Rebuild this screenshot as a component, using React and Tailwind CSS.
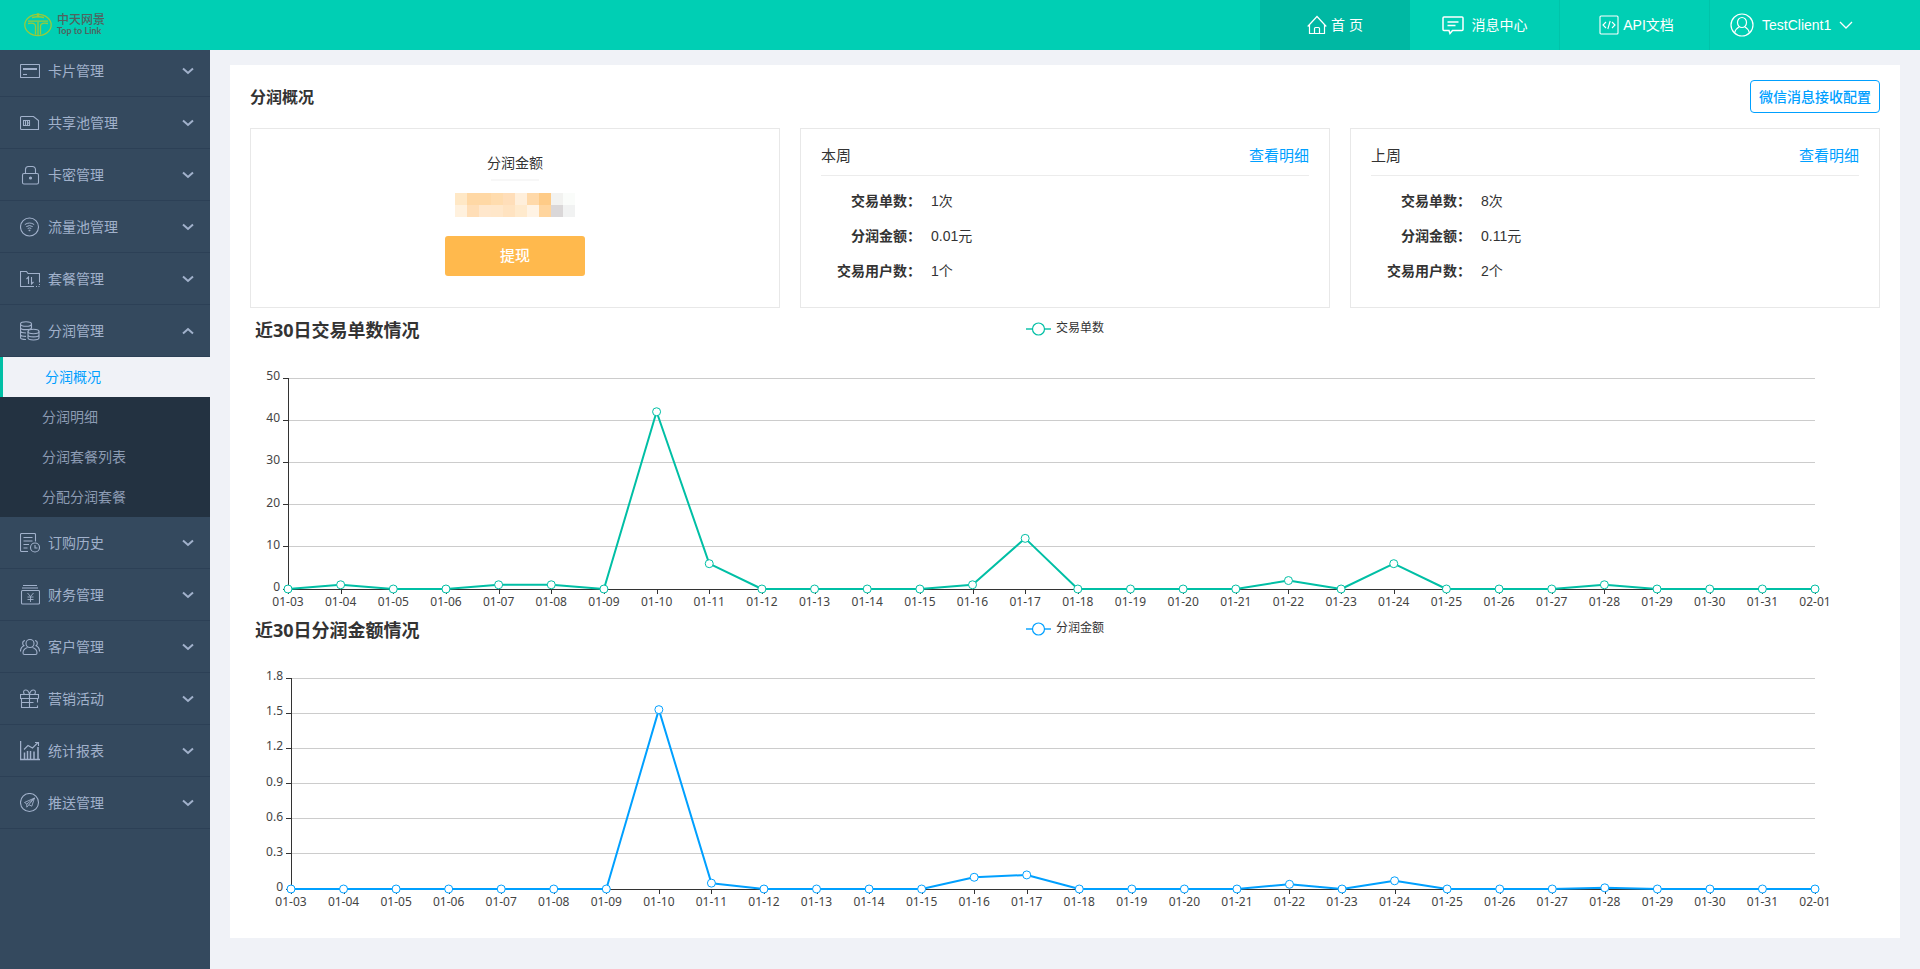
const CJK = "font-['Liberation_Sans','Noto_Sans_CJK_SC',sans-serif]";
const NOTO = "font-['Noto_Sans','Noto_Sans_CJK_SC',sans-serif]";

const ICONS = {
  card: (
    <>
      <rect x="0.5" y="3.5" width="19" height="13" rx="0.5" />
      <path d="M3 8h14" strokeWidth="2" />
      <path d="M3 13.5h4" />
    </>
  ),
  sim: (
    <>
      <path d="M1.5 3.5h12l5 4v9h-17a1 1 0 0 1-1-1v-11a1 1 0 0 1 1-1z" />
      <path d="M3.5 7.5h6v5h-6zM5.5 7.5v5M7.5 7.5v5M7.5 10h2" />
    </>
  ),
  lock: (
    <>
      <rect x="2.5" y="8.5" width="16" height="10.5" rx="1.5" />
      <path d="M5.5 8V4.5a3 3 0 0 1 3-3h4a3 3 0 0 1 3 3V8" />
      <circle cx="10.5" cy="13" r="1" fill="currentColor" />
    </>
  ),
  wifi: (
    <>
      <circle cx="9.5" cy="10" r="9" />
      <path d="M4.800 7.600q4.700-3.200 9.400 0M6.300 9.600q3.200-2.100 6.400 0M7.700 11.500q1.800-1.200 3.600 0" strokeWidth="1" />
      <path d="M8.700 13h1.600l-.8 1.200z" fill="currentColor" strokeWidth="0.600" />
    </>
  ),
  folder: (
    <>
      <path d="M14 17.5H.5v-15h6l1.5 2h11.500v9" />
      <path d="M8.500 15V8l-2 2M11.500 8v7l2-2" />
      <path d="M19.500 15v1M16 17.500h1M18.500 17.500h1" />
    </>
  ),
  coins: (
    <>
      <ellipse cx="6" cy="3" rx="5.500" ry="2.300" />
      <path d="M.5 3v13.500c0 1.200 2.500 2 5.500 2M11.500 3v4.500M.5 6.400c0 1.200 2.500 2.200 5.500 2.200s5.500-1 5.500-2.200M.5 9.800c0 1.200 2.500 2.100 5.500 2.200M.5 13.200c0 1.200 2.500 2.100 5.500 2.200" />
      <ellipse cx="13.500" cy="10.500" rx="5.500" ry="2.200" />
      <path d="M8 10.500v6.300c0 1.200 2.500 2.200 5.500 2.200s5.500-1 5.500-2.200v-6.300M8 13.700c0 1.200 2.500 2.200 5.500 2.200s5.500-1 5.500-2.200" />
    </>
  ),
  order: (
    <>
      <path d="M15.500 8.500v-7a1 1 0 0 0-1-1h-13a1 1 0 0 0-1 1v16a1 1 0 0 0 1 1H8" />
      <path d="M3.500 4.500h9M3.500 8h9M3.500 11.500h5.500M3.500 15h4" />
      <circle cx="15" cy="14.500" r="4.500" />
      <path d="M15 12v3h2.500" />
    </>
  ),
  finance: (
    <>
      <path d="M3 .5h14M2 3h16" />
      <rect x="1.500" y="5.500" width="18" height="13.500" rx="1" />
      <path d="M7.500 8l3 3.500 3-3.500M10.500 11.500v5.500M7.500 12h6M7.500 14.500h6" strokeWidth="0.900" />
    </>
  ),
  users: (
    <>
      <circle cx="10" cy="6.500" r="4" />
      <path d="M7.500 10.500c-2.500.8-4.500 3-4.500 5.500 0 .9.500 1.500 1.500 1.500h11c1 0 1.500-.6 1.500-1.500 0-2.500-2-4.700-4.500-5.500" />
      <path d="M5 3.500c-1.500.3-2.300 1.300-2.300 2.700 0 1 .4 1.900 1.200 2.500C1.700 9.700.5 11.500.5 14.500M15 3.500c1.500.3 2.300 1.300 2.300 2.700 0 1-.4 1.900-1.200 2.500 2.200 1 3.400 2.800 3.400 5.800" />
    </>
  ),
  gift: (
    <>
      <path d="M18.500 9.500v-4H.5v4h18M1.500 9.500v9h16v-2M17.500 9.500v4M9.500 5.500v13M1.500 13.500h12" />
      <path d="M9.500 5.500C9 3 7.500 1 5.500 1 3.300 1 3 3.500 4.500 5.500M9.500 5.500C10 3 11.500 1 13.500 1c2.200 0 2.500 2.500 1 4.500" />
    </>
  ),
  stats: (
    <>
      <path d="M.5 0v18.500H20" strokeWidth="1.500" />
      <path d="M4.500 18v-6.500M7.500 18v-8M10.500 18v-8M14 18v-7.500M18 18V6" strokeWidth="1.500" />
      <path d="M4 8.500l4-4 4.500 2.500L18 1.500M15 1.500h3.500V5" />
    </>
  ),
  push: (
    <>
      <circle cx="9.500" cy="9.500" r="9" />
      <path d="M14.500 5L4.500 9.500l2.300 1.500L14.500 5l-2.700 8.200-3-1.500L14.500 5zM6.800 11v3.200l2-2.300" strokeWidth="0.900" />
    </>
  ),
};

function MenuIcon({ name }) {
  return (
    <svg viewBox="0 0 20 20" className="size-5 shrink-0" fill="none" stroke="currentColor" strokeWidth="1.1" aria-hidden="true">
      {ICONS[name]}
    </svg>
  );
}

const MENU = [
  { label: '卡片管理', icon: 'card' },
  { label: '共享池管理', icon: 'sim' },
  { label: '卡密管理', icon: 'lock' },
  { label: '流量池管理', icon: 'wifi' },
  { label: '套餐管理', icon: 'folder' },
  { label: '分润管理', icon: 'coins', children: ['分润概况', '分润明细', '分润套餐列表', '分配分润套餐'] },
  { label: '订购历史', icon: 'order' },
  { label: '财务管理', icon: 'finance' },
  { label: '客户管理', icon: 'users' },
  { label: '营销活动', icon: 'gift' },
  { label: '统计报表', icon: 'stats' },
  { label: '推送管理', icon: 'push' },
];

function Sidebar() {
  return (
    <nav className="w-[210px] shrink-0 overflow-hidden bg-[#34495e] text-sm text-[#a1b1cb]">
      <ul className="-mt-[5px]">
        {MENU.map((item) => (
          <li key={item.label}>
            <button
              type="button"
              aria-expanded={Boolean(item.children)}
              className="flex h-[52px] w-full items-center gap-2 border-b border-[#2c4056] pr-4 pl-5 text-left"
            >
              <MenuIcon name={item.icon} />
              <span className="grow">{item.label}</span>
              <svg viewBox="0 0 12 8" className="h-2 w-3" fill="none" stroke="currentColor" strokeWidth="2" aria-hidden="true">
                <path d={item.children ? 'M1 6.500l5-4.500 5 4.500' : 'M1 1.500L6 6l5-4.500'} />
              </svg>
            </button>
            {item.children && (
              <ul className="bg-[#233241]">
                {item.children.map((child, i) => (
                  <li key={child}>
                    <a
                      href="#"
                      className={
                        i === 0
                          ? 'flex h-10 items-center border-l-3 border-[#00bfa5] bg-[#f0f2f7] pl-[42px] text-[#00a0ff]'
                          : 'flex h-10 items-center pl-[42px] text-[#8c9bb3]'
                      }
                    >
                      {child}
                    </a>
                  </li>
                ))}
              </ul>
            )}
          </li>
        ))}
      </ul>
    </nav>
  );
}

function Logo() {
  return (
    <a href="#" className="flex items-center gap-[5px] pl-6" aria-label="中天网景 Top to Link">
      <svg viewBox="0 0 28 24" className="h-6 w-7" fill="none" stroke="#98cb3b" strokeWidth="1.300" aria-hidden="true">
        <ellipse cx="14" cy="12" rx="13.200" ry="10.700" />
        <path d="M8 4.500q6-1.500 12 0M4 8.200h20" />
        <path d="M4 10.500c4-.8 7.500-.3 7.500 2.500v8.500M24 10.500c-4-.8-7.500-.3-7.500 2.500v8.500M14 9v13" />
        <path d="M14 .3v4" strokeWidth="2.500" />
      </svg>
      <span className="flex flex-col text-[#4f6460]">
        <span className="text-[12px] leading-[11px] font-medium">中天网景</span>
        <span className="font-['Lato',sans-serif] text-[9px] leading-[9px] font-bold">Top to Link</span>
      </span>
    </a>
  );
}

function Header() {
  return (
    <header className="flex h-[50px] items-stretch justify-between bg-[#00cfb4] text-sm text-white">
      <Logo />
      <nav className="flex">
        <a href="#" className="flex w-[150px] items-center justify-center gap-1 bg-[#00b8a3]">
          <svg viewBox="0 0 20 20" className="size-5" fill="none" stroke="currentColor" strokeWidth="1.200" aria-hidden="true">
            <path d="M.7 11.500L10 1.500l9.300 10M2.500 10v8.500h15V10M7.500 18.500v-5a1 1 0 0 1 1-1h3a1 1 0 0 1 1 1v5" />
          </svg>
          首 页
        </a>
        <a href="#" className="flex w-[150px] items-center justify-center gap-2 border-r border-[#00c4aa]">
          <svg viewBox="0 0 22 20" className="h-5 w-[22px]" fill="none" stroke="currentColor" strokeWidth="1.500" aria-hidden="true">
            <path d="M2 2h18a1 1 0 0 1 1 1v11.500a1 1 0 0 1-1 1H10.500L8 18.500 7 15.500H2a1 1 0 0 1-1-1V3a1 1 0 0 1 1-1zM5.500 7h11M5.500 10.500h8" />
          </svg>
          消息中心
        </a>
        <a href="#" className="flex w-[150px] items-center justify-center gap-1 border-r border-[#00c4aa] pl-1">
          <svg viewBox="0 0 20 20" className="size-5" fill="none" stroke="currentColor" strokeWidth="1.100" aria-hidden="true">
            <rect x="1" y="1" width="18" height="18" rx="1" />
            <path d="M7 7l-3 3 3 3M13 7l3 3-3 3M11.200 6l-2.400 8" />
          </svg>
          API文档
        </a>
        <button type="button" className="flex w-[210px] items-center gap-2 pl-5">
          <svg viewBox="0 0 24 24" className="size-6" fill="none" stroke="currentColor" strokeWidth="1.200" aria-hidden="true">
            <circle cx="12" cy="12" r="11" />
            <ellipse cx="12" cy="9.500" rx="4.500" ry="5" />
            <path d="M4.500 20c.8-3 2.500-5 4.800-6.200M19.500 20c-.8-3-2.500-5-4.800-6.200" />
          </svg>
          TestClient1
          <svg viewBox="0 0 14 8" className="h-2 w-[14px]" fill="none" stroke="currentColor" strokeWidth="1.300" aria-hidden="true">
            <path d="M1 1l6 6 6-6" />
          </svg>
        </button>
      </nav>
    </header>
  );
}

const MOSAIC = [
  'bg-[#ffe8c6]', 'bg-[#ffd8a5]', 'bg-[#ffd8a5]', 'bg-[#ffdcae]', 'bg-[#ffdeb9]', 'bg-[#ffefdb]', 'bg-[#ffd9a9]', 'bg-[#fecb87]', 'bg-[#f2f2f0]', 'bg-[#fafcfa]',
  'bg-[#fff1de]', 'bg-[#ffdeb7]', 'bg-[#ffe7cc]', 'bg-[#ffe7ca]', 'bg-[#ffe3c1]', 'bg-[#ffeacd]', 'bg-[#fff3e4]', 'bg-[#ffd59e]', 'bg-[#dad7d8]', 'bg-[#f1f2f2]',
];

function BalanceCard() {
  return (
    <section className="flex h-[180px] flex-col items-center border border-[#e8e8e8] pt-[22px]">
      <h2 className="text-sm leading-6">分润金额</h2>
      <div className="mt-1 h-[2px] w-12 bg-[#f7f7f7]" />
      <div className="mt-3 grid w-[120px] grid-cols-10">
        {MOSAIC.map((tone, i) => (
          <span key={i} className={`h-3 ${tone}`} />
        ))}
      </div>
      <button type="button" className="mt-[19px] h-10 w-[140px] rounded-[3px] bg-[#ffb94d] text-[15px] font-medium text-white">
        提现
      </button>
    </section>
  );
}

function WeekCard({ title, rows }) {
  return (
    <section className="h-[180px] border border-[#e8e8e8] px-5 pt-2">
      <div className="flex h-[39px] items-center justify-between border-b border-[#ececec] text-[15px]">
        <h2>{title}</h2>
        <a href="#" className="text-[#00a0ff]">查看明细</a>
      </div>
      <dl className="pt-2 text-sm leading-[35px]">
        {rows.map(([label, value]) => (
          <div key={label} className="flex gap-[10px]">
            <dt className="w-[100px] text-right font-bold">{label}：</dt>
            <dd>{value}</dd>
          </div>
        ))}
      </dl>
    </section>
  );
}

const DAYS = [
  '01-03', '01-04', '01-05', '01-06', '01-07', '01-08', '01-09', '01-10', '01-11', '01-12',
  '01-13', '01-14', '01-15', '01-16', '01-17', '01-18', '01-19', '01-20', '01-21', '01-22',
  '01-23', '01-24', '01-25', '01-26', '01-27', '01-28', '01-29', '01-30', '01-31', '02-01',
];
const ORDERS = [0, 1, 0, 0, 1, 1, 0, 42, 6, 0, 0, 0, 0, 1, 12, 0, 0, 0, 0, 2, 0, 6, 0, 0, 0, 1, 0, 0, 0, 0];
const AMOUNTS = [0, 0, 0, 0, 0, 0, 0, 1.53, 0.05, 0, 0, 0, 0, 0.1, 0.12, 0, 0, 0, 0, 0.04, 0, 0.07, 0, 0, 0, 0.01, 0, 0, 0, 0];

function LineChart({ title, legend, color, ticks, values, left }) {
  const right = 1565;
  const top = 66;
  const bottom = 277;
  const max = ticks[ticks.length - 1];
  const x = (i) => left + ((right - left) * i) / (values.length - 1);
  const y = (v) => bottom - ((bottom - top) * v) / max;
  const snap = (n) => Math.floor(n) + 0.5;
  return (
    <svg viewBox="0 0 1630 300" className={`block h-auto w-full ${NOTO}`} role="img" aria-label={title}>
      <text x="5" y="25" fontSize="18" fontWeight="bold" fill="#333">{title}</text>
      <path d="M776 17h25" stroke={color} strokeWidth="2" strokeOpacity="0.7" />
      <circle cx="788.500" cy="17" r="6" fill="#fff" stroke={color} strokeWidth="1.200" />
      <text x="806" y="20" fontSize="12" fill="#333">{legend}</text>

      {ticks.map((t) => (
        <g key={t}>
          {t > 0 && <path d={`M${left} ${snap(y(t))}H${right}`} stroke="#ccc" />}
          <path d={`M${left - 5} ${snap(y(t))}H${left}`} stroke="#333" />
          <text x={left - 8} y={y(t) + 2} fontSize="12" textAnchor="end" fill="#444">{t}</text>
        </g>
      ))}
      <path d={`M${left + 0.5} ${top}V${bottom}M${left} ${bottom + 0.5}H${right}`} stroke="#333" fill="none" />
      {DAYS.map((day, i) => (
        <g key={day}>
          <path d={`M${Math.round(x(i)) + 0.5} ${bottom}v5`} stroke="#333" />
          <text x={x(i)} y="294" fontSize="12" textAnchor="middle" fill="#444">{day}</text>
        </g>
      ))}

      <polyline
        points={values.map((v, i) => `${x(i)},${y(v)}`).join(' ')}
        fill="none"
        stroke={color}
        strokeWidth="2"
        strokeLinejoin="bevel"
      />
      {values.map((v, i) => (
        <circle key={i} cx={x(i)} cy={y(v)} r="4" fill="#fff" stroke={color} />
      ))}
    </svg>
  );
}

export default function App() {
  return (
    <div className={`flex min-h-screen flex-col bg-[#f0f2f7] text-[#333] ${CJK}`}>
      <Header />
      <div className="flex grow items-stretch">
        <Sidebar />
        <main className="min-w-0 grow px-5 pt-[15px] pb-5">
          <div className="bg-white px-5 pt-[15px] pb-[26px]">
            <div className="flex items-center justify-between pb-[15px]">
              <h1 className="pt-[3px] text-base font-bold">分润概况</h1>
              <button type="button" className="h-[33px] rounded border border-[#00a0ff] px-2 text-sm font-medium text-[#00a0ff]">
                微信消息接收配置
              </button>
            </div>
            <div className="grid grid-cols-3 gap-5 pb-1">
              <BalanceCard />
              <WeekCard title="本周" rows={[['交易单数', '1次'], ['分润金额', '0.01元'], ['交易用户数', '1个']]} />
              <WeekCard title="上周" rows={[['交易单数', '8次'], ['分润金额', '0.11元'], ['交易用户数', '2个']]} />
            </div>
            <LineChart
              title="近30日交易单数情况"
              legend="交易单数"
              color="#00bfa5"
              ticks={[0, 10, 20, 30, 40, 50]}
              values={ORDERS}
              left={38}
            />
            <LineChart
              title="近30日分润金额情况"
              legend="分润金额"
              color="#00a0ff"
              ticks={[0, 0.3, 0.6, 0.9, 1.2, 1.5, 1.8]}
              values={AMOUNTS}
              left={41}
            />
          </div>
        </main>
      </div>
    </div>
  );
}
